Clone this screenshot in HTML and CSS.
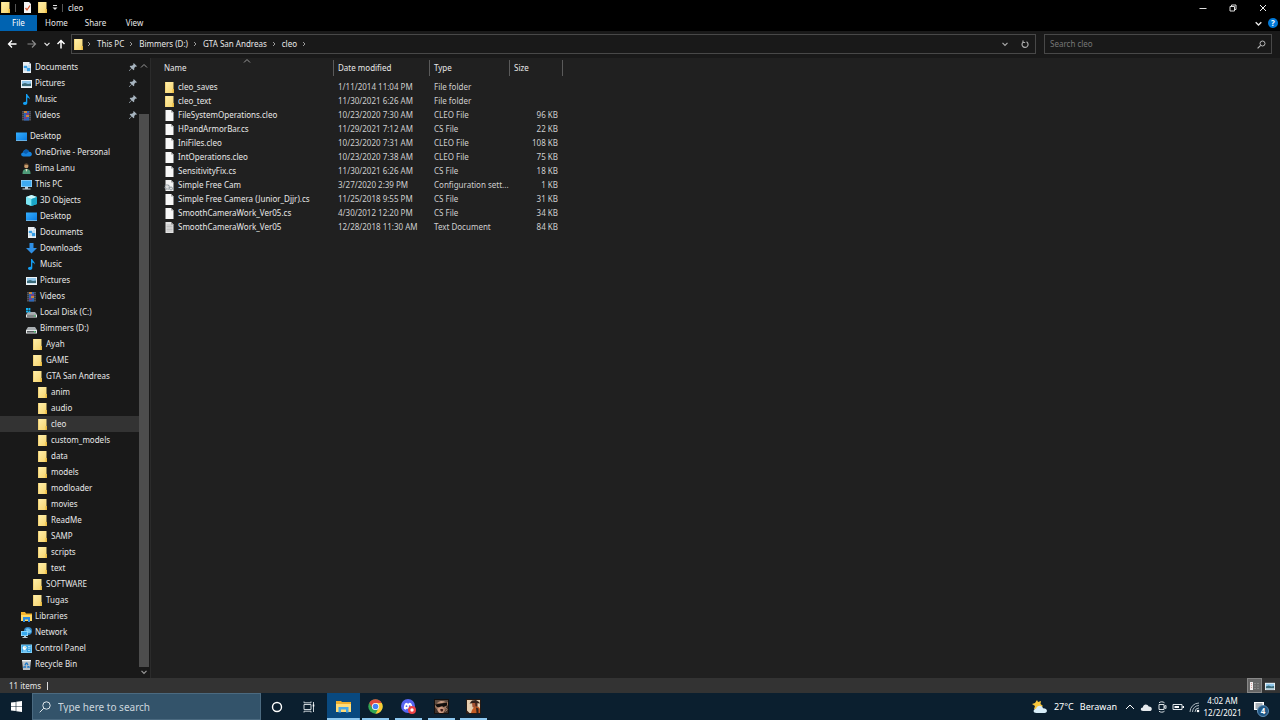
FILE: index.html
```html
<!DOCTYPE html>
<html lang="en">
<head>
<meta charset="utf-8">
<title>cleo</title>
<link rel="stylesheet" href="styles.css">
</head>
<body>
<svg class="sprite" aria-hidden="true">
  <defs>
    <linearGradient id="gFolder" x1="0" y1="0" x2="1" y2="1"><stop offset="0" stop-color="#fff0ae"/><stop offset="1" stop-color="#f6d36a"/></linearGradient>
    <linearGradient id="gBlue" x1="0" y1="0" x2="1" y2="1"><stop offset="0" stop-color="#36b0ff"/><stop offset="1" stop-color="#0b7be0"/></linearGradient>
  </defs>
  <symbol id="folder" viewBox="0 0 11 11"><path d="M1 0h8.500v7h.5v4H1z" fill="url(#gFolder)"/><path d="M8.500 7H10v4H8.500z" fill="#e9b93f"/><path d="M1 0h1v11H1z" fill="#f3d377"/></symbol>
  <symbol id="doc" viewBox="0 0 11 11"><path d="M2 0h6l2 2v9H2z" fill="#e9eef2"/><path d="M8 0v2h2z" fill="#9fb2c2"/><path d="M3 4h3v2H3zM7 4h2M3 8h2M6 6h3v3H6z" fill="#2f9be8" stroke="#4aa4e0" stroke-width=".5"/></symbol>
  <symbol id="pics" viewBox="0 0 11 11"><path d="M0 2h11v8H0z" fill="#eef3f6"/><path d="M1 3h9v6H1z" fill="#8fc6ea"/><path d="M1 6l3-1 3 1 3-.5V9H1z" fill="#3b6a78"/><path d="M1 8h9v1H1z" fill="#cfe2ee"/></symbol>
  <symbol id="music" viewBox="0 0 11 11"><path d="M5 0h1.200c.2 2 3 2.500 2.600 5.500-.4-1-1.300-1.700-2.500-1.900V9c0 1.200-1 2-2.300 2S2 10.300 2 9.300s1.200-1.900 3-1.600z" fill="#14a0f5"/></symbol>
  <symbol id="video" viewBox="0 0 11 11"><path d="M1 1h9v9.500H1z" fill="#50535b"/><path d="M3 1h5v9.500H3z" fill="#2b66b8"/><path d="M3 1h3v2H3zM5 5h3v2H5z" fill="#c9853d"/><path d="M5 3h3v2H5zM3 7h3v2H3z" fill="#743f8d"/><path d="M2 2v8M9 2v8" stroke="#15171b" stroke-width=".8" stroke-dasharray="1 1"/></symbol>
  <symbol id="desk" viewBox="0 0 11 11"><path d="M0 1.500h11v8H0z" fill="url(#gBlue)"/><path d="M0 9h11v.8H0z" fill="#7ecbff"/></symbol>
  <symbol id="cloud" viewBox="0 0 11 11"><path d="M2.500 9.500C-.6 9.500-.5 5.800 2 5.600 2.500 2 7 1.500 8 4.800c3.400-.3 4 4.700.5 4.700z" fill="#1583df"/><path d="M2 5.600C2.500 2 7 1.500 8 4.800L5 7z" fill="#0a5cad"/></symbol>
  <symbol id="user" viewBox="0 0 11 11"><path d="M1.500 11C1.500 6.500 3.500 6 5.500 6s4 .5 4 5z" fill="#4e9b78"/><path d="M4.500 6h2L5.500 9z" fill="#e9e3cb"/><circle cx="5.300" cy="3" r="2.200" fill="#c89b6c"/><path d="M3 3C2.500-.8 8-.8 7.600 3L6.500 1.700 4 1.800z" fill="#59412b"/></symbol>
  <symbol id="pc" viewBox="0 0 11 11"><path d="M0 1h11v7H0z" fill="#a9dcfb"/><path d="M.6 1.600h9.800v5.800H.6z" fill="#3fa9ef"/><path d="M4 8h3v1.500h2.500V10.500h-8v-1H4z" fill="#c0ccd4"/></symbol>
  <symbol id="cube" viewBox="0 0 11 11"><path d="M5.500 0L11 2v7l-5.500 2L0 9V2z" fill="#36c6de"/><path d="M0 2l5.500 2v7L0 9z" fill="#7ce5f2"/><path d="M5.500 0L11 2 5.500 4 0 2z" fill="#d2f8fb"/><path d="M5.500 4L11 2v7l-5.500 2z" fill="#1aa6c6"/></symbol>
  <symbol id="down" viewBox="0 0 11 11"><path d="M3.500 0h4v5H11L5.500 10.500 0 5h3.500z" fill="#2f8fe4"/></symbol>
  <symbol id="drive" viewBox="0 0 11 11"><path d="M2 4h7l2 3H0z" fill="#a9aeb1"/><path d="M0 7h11v3.500H0z" fill="#e8ebec"/><path d="M1 8h9v1.600H1z" fill="#55595c"/><path d="M8 8h1.300v1.400H8z" fill="#43d06c"/></symbol>
  <symbol id="cdrive" viewBox="0 0 11 11"><path d="M2 5h7l2 2.500H0z" fill="#a9aeb1"/><path d="M0 7.500h11v3H0z" fill="#e8ebec"/><path d="M1 8.300h9v1.400H1z" fill="#55595c"/><path d="M8 8.300h1.300v1.300H8z" fill="#43d06c"/><path d="M0 1h2v2H0zM2.400 1h2v2h-2zM0 3.400h2v2H0zM2.400 3.400h2v2h-2z" fill="#15b1ef"/></symbol>
  <symbol id="libs" viewBox="0 0 11 11"><path d="M0 1h4l1 1.500h6V10H0z" fill="#f5b52e"/><path d="M0 4h11v6H0z" fill="#ffd967"/><path d="M2 6h7v5H7V8.500H4V11H2z" fill="#2c8be0"/></symbol>
  <symbol id="net" viewBox="0 0 11 11"><circle cx="7" cy="4" r="4" fill="#2d84c6"/><path d="M4.500 2.500Q7 0 9.500 3T7 6z" fill="#74c4ef"/><path d="M0 4h7v5H0z" fill="#a7e1ff"/><path d="M.7 4.700h5.600v3.600H.7z" fill="#38aaf0"/><path d="M3 9h2v1h1.500v1h-5v-1H3z" fill="#b6c7d2"/></symbol>
  <symbol id="panel" viewBox="0 0 11 11"><path d="M0 1.500h11v8.500H0z" fill="#8ed8fb"/><path d="M.7 2.200h9.600v7H.7z" fill="#3ba4e2"/><circle cx="3.500" cy="5" r="1.900" fill="#fff"/><path d="M3.500 5V3.100A1.900 1.900 0 0 1 5.400 5zM2 8h4M7 3.500h2.500M7 5.200h2.500M7 7.500h2" stroke="#c9efff" fill="#f3b04c" stroke-width=".8"/></symbol>
  <symbol id="bin" viewBox="0 0 11 11"><path d="M1 1h9L9 11H2z" fill="#b9c0c5"/><path d="M1 1h9v1.300H1z" fill="#f0f3f4"/><path d="M5.500 3.500L8 8H3z" fill="none" stroke="#1c78c8" stroke-width="1.300" stroke-dasharray="3 1"/></symbol>
  <symbol id="file" viewBox="0 0 11 11"><path d="M1.500 0h5.500l2.500 2.500V11h-8z" fill="#f7f7f7"/><path d="M7 0v2.500h2.500z" fill="#a8a8a8"/></symbol>
  <symbol id="txt" viewBox="0 0 11 11"><path d="M1.500 0h5.500l2.500 2.500V11h-8z" fill="#e3e3e3"/><path d="M7 0v2.500h2.500z" fill="#989898"/><path d="M2.500 3h6M2.500 4.500h6M2.500 6h6M2.500 7.500h6M2.500 9h6" stroke="#a8a8a8" stroke-width=".6"/></symbol>
  <symbol id="ini" viewBox="0 0 11 11"><path d="M1.500 0h5.500l2.500 2.500V11h-8z" fill="#f2f2f2"/><path d="M7 0v2.500h2.500z" fill="#a8a8a8"/><circle cx="3.200" cy="7" r="2.200" fill="#ddd" stroke="#8c979d" stroke-width="1.200" stroke-dasharray="1.200 .5"/><circle cx="7" cy="8.500" r="1.500" fill="#ddd" stroke="#8c979d"/></symbol>
  <symbol id="pin" viewBox="0 0 8 8"><path d="M4.700 0L8 3.300l-.9.400-.5-.2-1.400 1.500.1 1.600-.8.700L2.800 5.600.4 8H0v-.4l2.400-2.400L.7 3.500l.7-.8 1.600.1 1.500-1.400-.2-.5z" fill="#a7b4bf"/></symbol>
  <symbol id="crumb" viewBox="0 0 6 6"><path d="M2 1l2 2-2 2" fill="none" stroke="#9a9a9a"/></symbol>
  <symbol id="chev" viewBox="0 0 8 8"><path d="M1.500 2.800L4 5.300l2.500-2.500" fill="none" stroke="currentColor" stroke-width="1.200"/></symbol>
  <symbol id="chevup" viewBox="0 0 8 8"><path d="M1 5.500l3-3 3 3" fill="none" stroke="currentColor"/></symbol>
</svg>

<div class="window">
  <header class="titlebar">
    <svg class="ico"><use href="#folder"/></svg>
    <i class="tick"></i>
    <button class="plain check" aria-label="Properties"><svg class="ico" viewBox="0 0 11 11"><path d="M2 0h5l2 2v9H2z" fill="#f5f5f5"/><path d="M3.500 6L5 8l3-4.500" fill="none" stroke="#dc5a31" stroke-width="1.300"/></svg></button>
    <button class="plain new" aria-label="New folder"><svg class="ico"><use href="#folder"/></svg></button>
    <button class="plain more" aria-label="Customize"><svg width="6" height="7" viewBox="0 0 6 7"><path d="M1 1.500h4" stroke="#ddd"/><path d="M.5 3.500h5L3 6z" fill="#ddd"/></svg></button>
    <i class="tick"></i>
    <h1 class="title">cleo</h1>
    <div class="winbtns">
      <button class="plain" aria-label="Minimize"><svg viewBox="0 0 8 8"><path d="M.5 4.500h7" stroke="#ddd"/></svg></button>
      <button class="plain" aria-label="Restore"><svg viewBox="0 0 8 8"><path d="M1 2.500h4.500V7H1zM2.500 2.500V1H7v4.500H5.500" fill="none" stroke="#ddd"/></svg></button>
      <button class="plain" aria-label="Close"><svg viewBox="0 0 8 8"><path d="M1 1l6 6M7 1L1 7" stroke="#eee"/></svg></button>
    </div>
  </header>
  <nav class="ribbon">
    <button class="plain tab file">File</button>
    <button class="plain tab">Home</button>
    <button class="plain tab">Share</button>
    <button class="plain tab">View</button>
    <button class="plain expand" aria-label="Expand ribbon"><svg width="9" height="9"><use href="#chev"/></svg></button>
    <button class="plain help" aria-label="Help">?</button>
  </nav>
  <div class="addrrow">
    <button class="plain nb" aria-label="Back"><svg viewBox="0 0 10 10"><path d="M9.500 5H1.500M5 1.500L1.500 5 5 8.500" fill="none" stroke="#fff" stroke-width="1.300"/></svg></button>
    <button class="plain nb" aria-label="Forward"><svg viewBox="0 0 10 10"><path d="M.5 5h8M5 1.500L8.500 5 5 8.500" fill="none" stroke="#8a8a8a" stroke-width="1.200"/></svg></button>
    <button class="plain nb small" aria-label="Recent"><svg><use href="#chev"/></svg></button>
    <button class="plain nb up" aria-label="Up"><svg viewBox="0 0 10 10"><path d="M5 9.500v-8M1.500 5L5 1.500 8.500 5" fill="none" stroke="#fff" stroke-width="1.500"/></svg></button>
    <div class="address">
      <svg class="ico"><use href="#folder"/></svg>
      <svg class="cr first"><use href="#crumb"/></svg><a href="#pc-root">This PC</a>
      <svg class="cr"><use href="#crumb"/></svg><a href="#d">Bimmers (D:)</a>
      <svg class="cr"><use href="#crumb"/></svg><a href="#gta">GTA San Andreas</a>
      <svg class="cr"><use href="#crumb"/></svg><a href="#cleo">cleo</a>
      <svg class="cr"><use href="#crumb"/></svg>
      <button class="plain drop" aria-label="Previous locations"><svg width="8" height="8"><use href="#chev"/></svg></button>
      <button class="plain refresh" aria-label="Refresh"><svg width="8" height="8" viewBox="0 0 8 8"><path d="M2.300 2A3 3 0 1 0 5.500 1.800M2 .5v2h2.200" fill="none" stroke="#aaa" stroke-width="1.200"/></svg></button>
    </div>
    <label class="search"><input type="text" placeholder="Search cleo" aria-label="Search cleo"><svg width="9" height="9" viewBox="0 0 9 9"><circle cx="5.500" cy="3.500" r="2.500" fill="none" stroke="#bbb"/><path d="M3.600 5.400L.6 8.400" stroke="#bbb" stroke-width="1.200"/></svg></label>
  </div>

  <div class="main">
    <aside class="side">
      <ul class="tree">
        <li class="l1"><svg class="ico"><use href="#doc"/></svg><a href="#q1">Documents</a><svg class="pin"><use href="#pin"/></svg></li>
        <li class="l1"><svg class="ico"><use href="#pics"/></svg><a href="#q2">Pictures</a><svg class="pin"><use href="#pin"/></svg></li>
        <li class="l1"><svg class="ico"><use href="#music"/></svg><a href="#q3">Music</a><svg class="pin"><use href="#pin"/></svg></li>
        <li class="l1"><svg class="ico"><use href="#video"/></svg><a href="#q4">Videos</a><svg class="pin"><use href="#pin"/></svg></li>
        <li class="l0"><svg class="ico"><use href="#desk"/></svg><a href="#t1">Desktop</a></li>
        <li class="l1"><svg class="ico"><use href="#cloud"/></svg><a href="#t2">OneDrive - Personal</a></li>
        <li class="l1"><svg class="ico"><use href="#user"/></svg><a href="#t3">Bima Lanu</a></li>
        <li class="l1"><svg class="ico"><use href="#pc"/></svg><a href="#t4">This PC</a></li>
        <li class="l2"><svg class="ico"><use href="#cube"/></svg><a href="#t5">3D Objects</a></li>
        <li class="l2"><svg class="ico"><use href="#desk"/></svg><a href="#t6">Desktop</a></li>
        <li class="l2"><svg class="ico"><use href="#doc"/></svg><a href="#t7">Documents</a></li>
        <li class="l2"><svg class="ico"><use href="#down"/></svg><a href="#t8">Downloads</a></li>
        <li class="l2"><svg class="ico"><use href="#music"/></svg><a href="#t9">Music</a></li>
        <li class="l2"><svg class="ico"><use href="#pics"/></svg><a href="#t10">Pictures</a></li>
        <li class="l2"><svg class="ico"><use href="#video"/></svg><a href="#t11">Videos</a></li>
        <li class="l2"><svg class="ico"><use href="#cdrive"/></svg><a href="#t12">Local Disk (C:)</a></li>
        <li class="l2"><svg class="ico"><use href="#drive"/></svg><a href="#t13">Bimmers (D:)</a></li>
        <li class="l3"><svg class="ico"><use href="#folder"/></svg><a href="#t14">Ayah</a></li>
        <li class="l3"><svg class="ico"><use href="#folder"/></svg><a href="#t15">GAME</a></li>
        <li class="l3"><svg class="ico"><use href="#folder"/></svg><a href="#t16">GTA San Andreas</a></li>
        <li class="l4"><svg class="ico"><use href="#folder"/></svg><a href="#t17">anim</a></li>
        <li class="l4"><svg class="ico"><use href="#folder"/></svg><a href="#t18">audio</a></li>
        <li class="l4 sel"><svg class="ico"><use href="#folder"/></svg><a href="#t19">cleo</a></li>
        <li class="l4"><svg class="ico"><use href="#folder"/></svg><a href="#t20">custom_models</a></li>
        <li class="l4"><svg class="ico"><use href="#folder"/></svg><a href="#t21">data</a></li>
        <li class="l4"><svg class="ico"><use href="#folder"/></svg><a href="#t22">models</a></li>
        <li class="l4"><svg class="ico"><use href="#folder"/></svg><a href="#t23">modloader</a></li>
        <li class="l4"><svg class="ico"><use href="#folder"/></svg><a href="#t24">movies</a></li>
        <li class="l4"><svg class="ico"><use href="#folder"/></svg><a href="#t25">ReadMe</a></li>
        <li class="l4"><svg class="ico"><use href="#folder"/></svg><a href="#t26">SAMP</a></li>
        <li class="l4"><svg class="ico"><use href="#folder"/></svg><a href="#t27">scripts</a></li>
        <li class="l4"><svg class="ico"><use href="#folder"/></svg><a href="#t28">text</a></li>
        <li class="l3"><svg class="ico"><use href="#folder"/></svg><a href="#t29">SOFTWARE</a></li>
        <li class="l3"><svg class="ico"><use href="#folder"/></svg><a href="#t30">Tugas</a></li>
        <li class="l1"><svg class="ico"><use href="#libs"/></svg><a href="#t31">Libraries</a></li>
        <li class="l1"><svg class="ico"><use href="#net"/></svg><a href="#t32">Network</a></li>
        <li class="l1"><svg class="ico"><use href="#panel"/></svg><a href="#t33">Control Panel</a></li>
        <li class="l1"><svg class="ico"><use href="#bin"/></svg><a href="#t34">Recycle Bin</a></li>
      </ul>
      <div class="scroll">
        <svg width="8" height="8"><use href="#chevup"/></svg>
        <div class="thumb"></div>
        <svg width="8" height="8"><use href="#chev"/></svg>
      </div>
    </aside>
    <main class="files">
      <table>
        <colgroup><col class="cn"><col class="cd"><col class="ct"><col class="cs"></colgroup>
        <thead><tr><th class="sorted">Name<svg class="sort" width="8" height="8"><use href="#chevup"/></svg></th><th>Date modified</th><th>Type</th><th>Size</th></tr></thead>
        <tbody>
          <tr><td><svg class="ico"><use href="#folder"/></svg>cleo_saves</td><td>1/11/2014 11:04 PM</td><td>File folder</td><td></td></tr>
          <tr><td><svg class="ico"><use href="#folder"/></svg>cleo_text</td><td>11/30/2021 6:26 AM</td><td>File folder</td><td></td></tr>
          <tr><td><svg class="ico"><use href="#file"/></svg>FileSystemOperations.cleo</td><td>10/23/2020 7:30 AM</td><td>CLEO File</td><td>96 KB</td></tr>
          <tr><td><svg class="ico"><use href="#file"/></svg>HPandArmorBar.cs</td><td>11/29/2021 7:12 AM</td><td>CS File</td><td>22 KB</td></tr>
          <tr><td><svg class="ico"><use href="#file"/></svg>IniFiles.cleo</td><td>10/23/2020 7:31 AM</td><td>CLEO File</td><td>108 KB</td></tr>
          <tr><td><svg class="ico"><use href="#file"/></svg>IntOperations.cleo</td><td>10/23/2020 7:38 AM</td><td>CLEO File</td><td>75 KB</td></tr>
          <tr><td><svg class="ico"><use href="#file"/></svg>SensitivityFix.cs</td><td>11/30/2021 6:26 AM</td><td>CS File</td><td>18 KB</td></tr>
          <tr><td><svg class="ico"><use href="#ini"/></svg>Simple Free Cam</td><td>3/27/2020 2:39 PM</td><td>Configuration sett...</td><td>1 KB</td></tr>
          <tr><td><svg class="ico"><use href="#file"/></svg>Simple Free Camera (Junior_Djjr).cs</td><td>11/25/2018 9:55 PM</td><td>CS File</td><td>31 KB</td></tr>
          <tr><td><svg class="ico"><use href="#file"/></svg>SmoothCameraWork_Ver05.cs</td><td>4/30/2012 12:20 PM</td><td>CS File</td><td>34 KB</td></tr>
          <tr><td><svg class="ico"><use href="#txt"/></svg>SmoothCameraWork_Ver05</td><td>12/28/2018 11:30 AM</td><td>Text Document</td><td>84 KB</td></tr>
        </tbody>
      </table>
    </main>
  </div>

  <footer class="status">
    <span>11 items</span><i class="bar"></i>
    <button class="plain view on" aria-label="Details view"><svg width="12" height="10" viewBox="0 0 12 10"><path d="M1 1h3v8H1z" fill="#f2efef"/><path d="M2.500 2v6" stroke="#d9a0a0" stroke-dasharray="1 1"/><path d="M5 2.500h6M5 5h6M5 7.500h6" stroke="#858585" stroke-dasharray="2 1"/></svg></button>
    <button class="plain view" aria-label="Thumbnail view"><svg width="10" height="10"><use href="#pics"/></svg></button>
  </footer>

  <div class="taskbar">
    <button class="plain start" aria-label="Start"><svg width="11" height="11" viewBox="0 0 11 11"><path d="M0 1.600L4.700.9v4.300H0zM5.300.8L11 0v5.200H5.300zM0 5.800h4.700v4.300L0 9.400zM5.300 5.800H11V11l-5.700-.8z" fill="#fff"/></svg></button>
    <label class="tsearch"><svg width="12" height="12" viewBox="0 0 12 12"><circle cx="7.500" cy="4.500" r="3.700" fill="none" stroke="#dfe6ea"/><path d="M4.800 7.200L.7 11.300" stroke="#dfe6ea"/></svg><input type="text" placeholder="Type here to search" aria-label="Type here to search"></label>
    <button class="plain tb" aria-label="Cortana"><svg width="12" height="12" viewBox="0 0 12 12"><circle cx="6" cy="6" r="4.500" fill="none" stroke="#fff" stroke-width="1.400"/></svg></button>
    <button class="plain tb" aria-label="Task view"><svg width="12" height="12" viewBox="0 0 12 12"><path d="M1 3.500h7v5H1zM1 .5v1.300h7V.5M1 11.500v-1.300h7v1.300M10.500 1v10" fill="none" stroke="#cbd3d8"/><path d="M9.700 3.500h1.600v2H9.700z" fill="#fff"/></svg></button>
    <div class="apps">
      <button class="plain app active" aria-label="File Explorer"><svg viewBox="0 0 15 15"><path d="M0 2h5l1 1h9v10H0z" fill="#efaf2e"/><path d="M0 5h15v8H0z" fill="#ffdc78"/><path d="M2.500 8h10v5.500H10V10.500H5v3H2.500z" fill="#49a8e8"/></svg></button>
      <button class="plain app" aria-label="Chrome"><svg viewBox="0 0 15 15"><circle cx="7.500" cy="7.500" r="7.200" fill="#33a853"/><path d="M1.300 3.900A7.200 7.200 0 0 1 13.700 3.900L7.500 7.500 4.400 9.300z" fill="#df4a3d"/><path d="M13.700 3.900A7.200 7.200 0 0 1 7.500 14.700L10.600 9.300 7.500 3.900z" fill="#fbc934"/><circle cx="7.500" cy="7.500" r="3.600" fill="#fff"/><circle cx="7.500" cy="7.500" r="2.800" fill="#4285f4"/></svg></button>
      <button class="plain app" aria-label="Discord"><svg viewBox="0 0 15 15"><circle cx="7" cy="7" r="7" fill="#5865f2"/><path d="M2.800 9.800C2.800 7 3.600 5 4.300 4.300l1.700-.6.500.7h1.200l.6-.7 1.700.6c.8 1 1.500 3.200 1.500 5.500l-2 1-.7-1H5.500l-.7 1z" fill="#fff"/><circle cx="5.500" cy="7.200" r=".9" fill="#5865f2"/><circle cx="8.700" cy="7.200" r=".9" fill="#5865f2"/><circle cx="11" cy="11" r="4" fill="#ed4245"/><circle cx="11" cy="11" r="1.700" fill="#fff"/></svg></button>
      <button class="plain app" aria-label="San Andreas"><svg viewBox="0 0 15 15"><path d="M0 0h15v15H0z" fill="#15110f"/><path d="M1 1h13v13H1z" fill="#9c7660"/><path d="M1 1h13v2L9 2.500 4 4 1 6z" fill="#5f4c40"/><path d="M3 3.500l4-1.500 4 .5-3 1.500z" fill="#d0a68d"/><path d="M1 5.500l12-2v3l-3.500 1.500L8 7 6 8.500 3 8z" fill="#120e0c"/><path d="M4 9l3-1.500L9.500 9l1 2-2 3H6l-3-2z" fill="#cf9c83"/><path d="M6 10.500l2-.8 1.500 1-1 1.800H7z" fill="#3b1b17"/><path d="M1 8l2 2.500L5 14H1zM12 8l2-2v8H9.500l2-3z" fill="#40322b"/><path d="M11.500 8.500l1.500 2-1.500 2" fill="none" stroke="#b58a70"/></svg></button>
      <button class="plain app" aria-label="San Andreas Multiplayer"><svg viewBox="0 0 15 15"><path d="M0 0h15v15H0z" fill="#251a14"/><path d="M1 1h13v13H1z" fill="#e4cdb0"/><path d="M3.500 4.500L6 1.500l4-.5 3 2 1 1.500-4-.5z" fill="#32201a"/><path d="M6 4h5v3.500L9 9.500 6.500 8z" fill="#a45231"/><path d="M9 4h2.500v4L9.500 7z" fill="#4a261a"/><path d="M7.500 9L12 7.500l2 2V14H5l1-3z" fill="#c15a22"/><path d="M10 8.500l2.500 1V14h-2zM1 11.500L3.500 14H1z" fill="#34231d"/></svg></button>
    </div>
    <div class="tray">
      <button class="plain weather"><svg width="16" height="14" viewBox="0 0 16 14"><path d="M5 0l1 2 3-1-.5 3L11 6 7 9 2 9 3 6 0 4l3-1z" fill="#f8c63c"/><path d="M4.500 13C.5 13 1 8.800 4 8.700 5 4.500 10.500 5 11 8.200c5-.2 5 4.800 1.500 4.800z" fill="#d8edf8"/></svg><span>27°C</span><span>Berawan</span></button>
      <button class="plain ti" aria-label="Hidden icons"><svg viewBox="0 0 12 12"><path d="M2 8l4-4 4 4" fill="none" stroke="#fff"/></svg></button>
      <button class="plain ti" aria-label="OneDrive"><svg viewBox="0 0 12 12"><path d="M3 10C0 10 .3 6.500 2.800 6.500 3.300 2.700 7.700 2.700 8.700 5.600c4-.2 4 4.400.8 4.400z" fill="#e6eaed"/></svg></button>
      <button class="plain ti" aria-label="Meet now"><svg viewBox="0 0 12 12"><path d="M3 3.500h5v5H3zM8 5.500l2-1v3l-2-1M3 1.800C4.500.5 7 .5 8.500 1.800M3 10.200c1.500 1.300 4 1.300 5.500 0" fill="none" stroke="#dce3e7"/></svg></button>
      <button class="plain ti" aria-label="Battery"><svg viewBox="0 0 12 12"><path d="M1 3.500h9v5H1z" fill="none" stroke="#dce3e7"/><path d="M2.500 5H7v2H2.500zM10.500 5H12v2h-1.500z" fill="#fff"/></svg></button>
      <button class="plain ti" aria-label="Wi-Fi"><svg viewBox="0 0 12 12"><path d="M2 11A9 9 0 0 1 11 2M4.500 11A6.500 6.500 0 0 1 11 4.500M7 11A4 4 0 0 1 11 7" fill="none" stroke="#aeb9c0"/><circle cx="10" cy="10" r="1.300" fill="#fff"/></svg></button>
      <button class="plain clock"><span>4:02 AM</span><span>12/2/2021</span></button>
      <button class="plain notif" aria-label="4 notifications"><svg width="12" height="12" viewBox="0 0 12 12"><path d="M1 1h10v8H6l-2 2.500V9H1z" fill="#fff"/><path d="M2.500 3h7M2.500 5h7M2.500 7h5" stroke="#233a4b" stroke-width=".8"/></svg><span class="badge">4</span></button>
    </div>
  </div>
</div>
</body>
</html>
```

FILE: styles.css
```css
* { box-sizing: border-box; }
body { margin: 0; background: #202020; font-family: "Noto Sans", "Open Sans", sans-serif; font-size: 8px; line-height: 12px; color: #e8e8e8; }
.sprite { position: absolute; width: 0; height: 0; }
svg { display: block; flex: none; }
a { color: inherit; text-decoration: none; }
.plain { display: flex; align-items: center; justify-content: center; margin: 0; padding: 0; border: 0; background: none; color: inherit; font: inherit; }
input { border: 0; padding: 0; background: none; color: inherit; font: inherit; min-width: 0; flex: 1; outline: 0; }
.ico { width: 11px; height: 11px; }

.window { display: flex; flex-direction: column; height: 100vh; overflow: hidden; }

.titlebar { display: flex; align-items: center; height: 15px; background: #000; }
.tick { width: 1px; height: 8px; background: #555; margin-left: 4px; }
.check { margin-left: 6px; }
.new { margin-left: 4px; }
.more { margin: 0 0 0 4px; }
.title { margin: 0 0 0 5px; font-size: 8px; font-weight: 400; }
.winbtns { display: flex; margin-left: auto; padding-right: 2px; }
.winbtns button { width: 30px; height: 15px; }
.winbtns svg { width: 8px; height: 8px; }

.ribbon { display: flex; align-items: center; height: 16px; background: #000; }
.tab { width: 39px; height: 16px; }
.tab.file { width: 37px; background: #0063b1; color: #fff; }
.expand { margin-left: auto; }
.help { width: 10px; height: 10px; margin: 0 2px 0 5px; border-radius: 50%; background: #0078d7; color: #fff; font-weight: 700; }

.addrrow { display: flex; align-items: center; height: 27px; padding: 0 8px 1px 2px; background: #191919; }
.nb { width: 20px; height: 20px; }
.nb svg { width: 10px; height: 10px; }
.nb.small { width: 10px; }
.nb.small svg { width: 8px; height: 8px; }
.nb.up { width: 18px; }
.address, .search { display: flex; align-items: center; height: 20px; border: 1px solid #484848; }
.address { flex: 1; margin-left: 1px; padding-left: 1px; }
.cr { width: 6px; height: 6px; margin: 0 5px 0 4px; }
.cr.first { margin-left: 2px; }
.drop { margin-left: auto; width: 20px; height: 18px; color: #aaa; }
.refresh { width: 20px; height: 18px; }
.search { width: 228px; margin-left: 8px; padding: 0 5px; }
.search input::placeholder { color: #777; opacity: 1; }

.main { display: flex; flex: 1; min-height: 0; }
.side { display: flex; width: 151px; background: #191919; border-right: 1px solid #2b2b2b; }
.tree { flex: 1; margin: 0; padding: 1px 0 0; list-style: none; overflow: hidden; }
.tree li { display: flex; align-items: center; gap: 3px; height: 16px; white-space: nowrap; }
.tree .l0 { margin-top: 5px; padding-left: 16px; }
.l1 { padding-left: 21px; }
.l2 { padding-left: 26px; }
.l3 { padding-left: 32px; }
.l4 { padding-left: 37px; }
.sel { background: #333; }
.pin { width: 8px; height: 8px; margin: 0 2px 0 auto; }
.scroll { display: flex; flex-direction: column; align-items: center; width: 10px; margin-right: 1px; padding: 4px 0 2px; color: #999; }
.thumb { flex: 1; width: 10px; margin: 44px 0 1px; background: #4d4d4d; }

.files { flex: 1; background: #202020; }
table { table-layout: fixed; width: 412px; border-collapse: collapse; }
.cn { width: 183px; }
.cd { width: 96px; }
.ct { width: 80px; }
.cs { width: 53px; }
th { height: 22px; padding: 0 4px 2px; font-weight: 400; text-align: left; background: linear-gradient(#5a5a5a, #5a5a5a) right 2px / 1px 16px no-repeat; }
th:first-child { padding-left: 13px; }
.sorted { position: relative; }
.sort { position: absolute; top: -1px; left: 92px; color: #999; }
td { height: 14px; padding: 0 4px; line-height: 14px; color: #cfcfcf; white-space: nowrap; }
td:first-child { display: flex; align-items: center; gap: 3px; padding-left: 13px; color: #e8e8e8; }
td:last-child { text-align: right; }
td:nth-child(4) { padding-right: 5px; }

.status { display: flex; align-items: center; height: 15px; padding: 0 3px 0 9px; background: #333; }
.bar { width: 1px; height: 8px; margin-left: 6px; background: #ddd; }
.view { width: 15px; height: 15px; }
.view.on { margin-left: auto; background: #666; border: 1px solid #888; }

.taskbar { display: flex; height: 27px; background: #0b1f2f; }
.start { width: 32px; }
.tsearch { display: flex; align-items: center; gap: 7px; width: 229px; padding: 0 6px; background: #33536a; border: 1px solid #4b6a80; font-size: 10px; }
.tsearch input::placeholder { color: #ccd6dd; opacity: 1; }
.tb { width: 32px; }
.apps { display: flex; width: 163px; margin-left: 2px; }
.app { flex: 1; background: linear-gradient(#8ec8f0, #8ec8f0) center bottom / 27px 2px no-repeat; }
.app.active { background: linear-gradient(#8ec8f0, #8ec8f0) center bottom / 100% 2px no-repeat #09497f; }
.app svg { width: 15px; height: 15px; }
.tray { display: flex; margin-left: auto; padding-right: 5px; }
.weather { gap: 6px; margin-right: 5px; font-size: 9px; color: #fff; }
.ti { width: 16px; }
.ti svg { width: 12px; height: 12px; }
.clock { flex-direction: column; width: 41px; color: #fff; }
.notif { position: relative; width: 32px; }
.badge { position: absolute; right: 6px; bottom: 3px; width: 12px; height: 12px; border-radius: 50%; background: #1f5684; border: 1px solid #5d8cb2; font-size: 8px; font-weight: 700; line-height: 10px; color: #fff; }
```
